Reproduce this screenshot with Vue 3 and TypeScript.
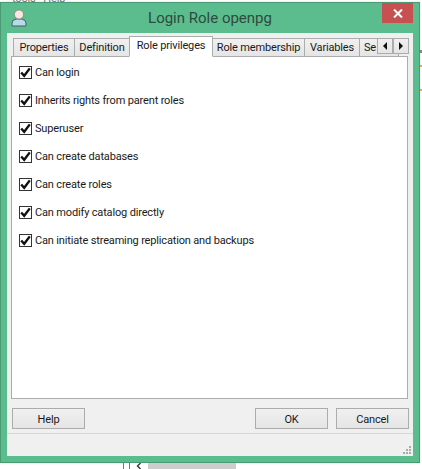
<template>
  <div class="page">
    <div class="behind-top">tools &nbsp; Help</div>
    <div class="behind-right"></div>
    <div class="window">
      <div class="titlebar">
        <svg class="user-icon" width="16" height="18" viewBox="0 0 16 18">
          <path d="M1 17 L1 14 Q1 11 5 10 L11 10 Q15 11 15 14 L15 17 Z" fill="#b5dbe8" stroke="#4a5a66" stroke-width="1" />
          <circle cx="8" cy="5.5" r="4.6" fill="#fbe6e0" stroke="#8a8a8a" stroke-width="1" />
        </svg>
        <span class="title">Login Role openpg</span>
        <div class="close">
          <svg width="10" height="9" viewBox="0 0 10 9">
            <path d="M1 0.5 L9 8.5 M9 0.5 L1 8.5" stroke="#fff" stroke-width="2" />
          </svg>
        </div>
      </div>
      <div class="client">
        <div class="tabs">
          <div
            v-for="tab in tabs"
            :key="tab.name"
            class="tab"
            :class="{ active: tab.name === activeTab, clipped: tab.name === 'Se' }"
            :style="{ width: tab.width + 'px' }"
          >{{ tab.name }}</div>
          <div class="scroller">
            <button class="arrow"><span class="tri left"></span></button>
            <button class="arrow"><span class="tri right"></span></button>
          </div>
        </div>
        <div class="pane">
          <label v-for="item in privileges" :key="item" class="check-row">
            <span class="box">
              <svg width="11" height="11" viewBox="0 0 11 11">
                <path d="M1.2 5.5 L4.2 8.8 L9.8 1.4" fill="none" stroke="#111" stroke-width="2.4" />
              </svg>
            </span>
            {{ item }}
          </label>
        </div>
        <div class="buttons">
          <button class="btn">Help</button>
          <div class="spacer"></div>
          <button class="btn">OK</button>
          <button class="btn">Cancel</button>
        </div>
        <div class="status">
          <svg class="grip" width="9" height="9" viewBox="0 0 9 9">
            <path d="M6 0h2v2H6zM3 3h2v2H3zM6 3h2v2H6zM0 6h2v2H0zM3 6h2v2H3zM6 6h2v2H6z" fill="#a9a9a9" />
          </svg>
        </div>
      </div>
    </div>
    <div class="behind-bottom">
      <span class="sb-box"></span>
      <span class="sb-chev">
        <svg width="6" height="6" viewBox="0 0 6 6">
          <path d="M4.5 0 L1.5 3 L4.5 6" fill="none" stroke="#333" stroke-width="1.4" />
        </svg>
      </span>
      <span class="sb-track"></span>
    </div>
  </div>
</template>

<script setup lang="ts">
const activeTab = 'Role privileges'

const tabs = [
  { name: 'Properties', width: 62 },
  { name: 'Definition', width: 56 },
  { name: 'Role privileges', width: 84 },
  { name: 'Role membership', width: 93 },
  { name: 'Variables', width: 56 },
  { name: 'Se', width: 40 },
]

const privileges = [
  'Can login',
  'Inherits rights from parent roles',
  'Superuser',
  'Can create databases',
  'Can create roles',
  'Can modify catalog directly',
  'Can initiate streaming replication and backups',
]
</script>

<style>
html,
body {
  margin: 0;
  background: #fff;
  overflow: hidden;
}
</style>

<style scoped>
.page {
  position: relative;
  width: 422px;
  height: 469px;
  overflow: hidden;
  padding-top: 2px;
  box-sizing: border-box;
  font-family: Roboto, "Noto Sans", sans-serif;
  font-size: 11px;
  letter-spacing: -0.16px;
  color: #1a1a1a;
}

.behind-top {
  position: absolute;
  top: -8px;
  left: 12px;
  font-size: 11px;
  color: #777;
}

.behind-right {
  position: absolute;
  top: 50px;
  left: 420px;
  width: 2px;
  height: 44px;
  background: linear-gradient(#8a8a8a 0 3px, #fff 3px 15px, #e0b060 15px 17px, #fff 17px 39px, #e0b060 39px 41px, #fff 41px);
}

.window {
  position: relative;
  width: 420px;
  height: 461px;
  box-sizing: border-box;
  border: 1px solid #4a9a74;
  background: #5bbd8e;
  padding: 0 6px 6px;
  display: flex;
  flex-direction: column;
  box-shadow: 0 0 2px rgba(0, 0, 0, 0.15);
}

.titlebar {
  position: relative;
  height: 30px;
  flex: none;
  display: flex;
  align-items: center;
  justify-content: center;
}

.user-icon {
  position: absolute;
  left: 4px;
  top: 6px;
}

.title {
  font-size: 15px;
  letter-spacing: 0;
  color: #2f4a3e;
  margin-top: -1px;
}

.close {
  position: absolute;
  top: 0;
  right: 0;
  width: 31px;
  height: 20px;
  background: #c75050;
  display: flex;
  align-items: center;
  justify-content: center;
}

.client {
  flex: 1;
  background: #f0f0f0;
  padding: 3px 4px 0;
  display: flex;
  flex-direction: column;
  min-height: 0;
}

.tabs {
  position: relative;
  display: flex;
  height: 20px;
  flex: none;
  padding-left: 2px;
}

.tab {
  box-sizing: border-box;
  height: 19px;
  margin-top: 2px;
  margin-right: -1px;
  border: 1px solid #acacac;
  background: linear-gradient(#f0f0f0, #e5e5e5);
  text-align: center;
  line-height: 17px;
  white-space: nowrap;
  overflow: hidden;
  flex: none;
}

.tab.active {
  position: relative;
  z-index: 1;
  height: 21px;
  margin-top: 0;
  background: #fff;
  border-bottom-color: #fff;
  line-height: 17px;
}

.tab.clipped {
  text-align: left;
  padding-left: 4px;
}

.scroller {
  position: absolute;
  top: 2px;
  right: 0;
  z-index: 2;
  display: flex;
}

.arrow {
  width: 16px;
  height: 16px;
  padding: 0;
  margin: 0;
  border: 1px solid #acacac;
  background: linear-gradient(#f0f0f0, #e5e5e5);
  display: flex;
  align-items: center;
  justify-content: center;
}

.tri {
  display: block;
  width: 0;
  height: 0;
  border-top: 4px solid transparent;
  border-bottom: 4px solid transparent;
}

.tri.left {
  border-right: 4px solid #111;
}

.tri.right {
  border-left: 4px solid #111;
}

.pane {
  height: 343px;
  flex: none;
  box-sizing: border-box;
  width: 397px;
  border: 1px solid #acacac;
  background: #fff;
  padding: 8px 7px 0;
  display: flex;
  flex-direction: column;
  gap: 14px;
}

.check-row {
  display: flex;
  align-items: center;
  gap: 3px;
  height: 14px;
  white-space: nowrap;
}

.box {
  box-sizing: border-box;
  width: 13px;
  height: 13px;
  border: 1px solid #333;
  background: #fff;
  display: flex;
  align-items: center;
  justify-content: center;
  flex: none;
}

.buttons {
  display: flex;
  gap: 8px;
  margin-top: 9px;
  padding-left: 1px;
  width: 398px;
  box-sizing: border-box;
  flex: none;
}

.spacer {
  flex: 1;
}

.btn {
  box-sizing: border-box;
  width: 73px;
  height: 21px;
  padding: 1px 0 0;
  border: 1px solid #acacac;
  background: linear-gradient(#f0f0f0, #e5e5e5);
  font-family: inherit;
  font-size: 11px;
  letter-spacing: inherit;
  color: #1a1a1a;
}

.status {
  position: relative;
  flex: 1;
  margin: 4px -4px 0;
  border-top: 1px solid #d7d7d7;
}

.grip {
  position: absolute;
  right: 1px;
  bottom: 1px;
}

.behind-bottom {
  position: absolute;
  left: 123px;
  bottom: 0;
  height: 6px;
  width: 113px;
  display: flex;
  background: #fff;
}

.sb-box {
  width: 7px;
  border: 1px solid #777;
  border-width: 0 1px;
  box-sizing: border-box;
}

.sb-chev {
  width: 18px;
  display: flex;
  justify-content: center;
}

.sb-track {
  flex: 1;
  background: #cdcdcd;
}
</style>
